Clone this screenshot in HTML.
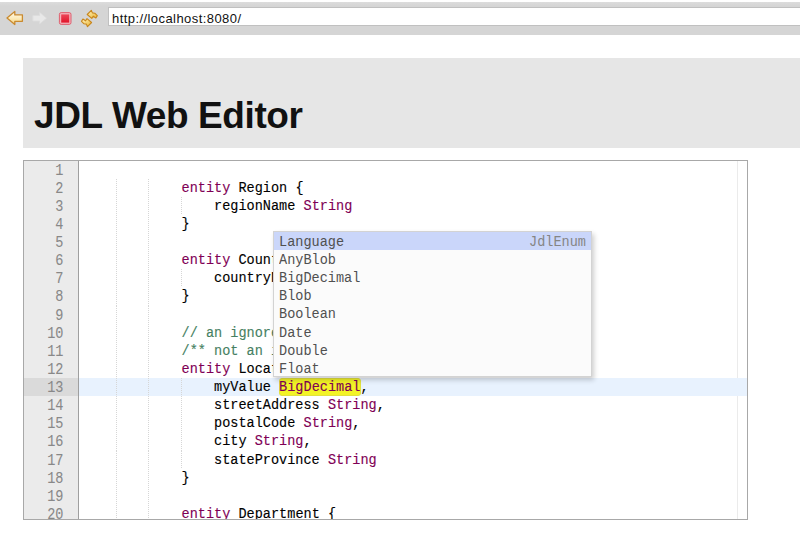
<!DOCTYPE html>
<html><head><meta charset="utf-8">
<style>
html,body{margin:0;padding:0;width:800px;height:539px;overflow:hidden;background:#fff;position:relative}
*{box-sizing:border-box}
.abs{position:absolute}
.ln{position:absolute;left:24px;width:39.5px;text-align:right;font:13.55px "Liberation Mono",monospace;color:#888;height:18.12px;line-height:18.12px;white-space:pre;padding-top:2px;transform:scaleY(1.15);transform-origin:0 14.5px;-webkit-text-stroke:0.05px currentColor}
.cl{position:absolute;left:84.0px;font:13.55px "Liberation Mono",monospace;color:#000;white-space:pre;height:18.12px;line-height:18.12px;padding-top:1px;transform:translateY(0.5px) scaleY(1.08);transform-origin:0 14px;-webkit-text-stroke:0.12px currentColor}
.kw{color:#7f0055}
.cm{color:#467f62}
.g{position:absolute;width:1px;background:repeating-linear-gradient(to bottom,#d6d6d6 0,#d6d6d6 1px,transparent 1px,transparent 2px)}
.pr{position:absolute;left:0;width:317px;height:18.12px;line-height:18.12px;font:13.55px "Liberation Mono",monospace;color:#505050;white-space:pre;padding-left:5px}
.pr span.t{display:inline-block;padding-top:2.5px;transform:scaleY(1.08);transform-origin:0 14px}
.pr.sel{background:#cad6fa}
.pr .m{position:absolute;right:5px;top:0;color:#858585;padding-top:2.5px;transform:scaleY(1.08);transform-origin:0 14px}
</style></head><body>
<div class="abs" style="left:0;top:2px;width:800px;height:33px;background:linear-gradient(to bottom,#dcdcdc 0,#d5d5d5 4px,#d5d5d5 100%)"></div>
<div class="abs" style="left:108px;top:7px;width:700px;height:19px;background:#fff;border:1px solid #c0c0c0;border-right:none;box-shadow:0 -0.5px 0.5px #c8c8c8"></div>
<div class="abs" style="left:112px;top:9.5px;font:13px 'Liberation Sans',sans-serif;color:#111;white-space:pre;line-height:17px;letter-spacing:0.43px">http://localhost:8080/</div>
<svg class="abs" style="left:0;top:0" width="108" height="35" viewBox="0 0 108 35">
  <defs>
    <linearGradient id="yl" x1="0" y1="0" x2="0" y2="1"><stop offset="0" stop-color="#fffdf2"/><stop offset="0.5" stop-color="#fdecbc"/><stop offset="1" stop-color="#f4d27c"/></linearGradient>
    <linearGradient id="yl2" x1="0" y1="0" x2="1" y2="1"><stop offset="0" stop-color="#fff4c0"/><stop offset="1" stop-color="#e9b22e"/></linearGradient>
    <linearGradient id="rd" x1="0" y1="0" x2="0" y2="1"><stop offset="0" stop-color="#ec4658"/><stop offset="1" stop-color="#e1142a"/></linearGradient>
  </defs>
  <path d="M7 17.9 L14.8 11.5 L14.8 14.9 L22.4 14.9 L22.4 21.3 L14.8 21.3 L14.8 24.5 Z" fill="url(#yl)" stroke="#c98a30" stroke-width="1.3" stroke-linejoin="round"/>
  <path d="M46.6 18.2 L39.6 12.3 L39.6 15.4 L32.8 15.4 L32.8 21 L39.6 21 L39.6 24 Z" fill="#e8e8e8" stroke="#dcdcdc" stroke-width="0.8" stroke-linejoin="round"/>
  <rect x="59.4" y="12.6" width="11.6" height="11.8" rx="1.8" fill="#f4b2ba" stroke="#dc5464" stroke-width="0.9"/>
  <rect x="61.2" y="14.4" width="8" height="8.2" fill="url(#rd)"/>
  <path d="M87.2 14.5 L91.3 10.3 L92.4 12.9 L94.8 13.2 L97.3 15.6 L95.9 18.0 L93.2 16.2 L91.8 18.4 Z" fill="url(#yl2)" stroke="#c8861c" stroke-width="1.1" stroke-linejoin="round"/>
  <path d="M91.6 22.5 L87.5 26.7 L86.4 24.1 L84.0 23.8 L81.5 21.4 L82.9 19.0 L85.6 20.8 L87.0 18.6 Z" fill="url(#yl2)" stroke="#c8861c" stroke-width="1.1" stroke-linejoin="round"/>
</svg>
<div class="abs" style="left:23px;top:58px;width:777px;height:90px;background:#e6e6e6"></div>
<div class="abs" style="left:34px;top:95px;font:bold 37px 'Liberation Sans',sans-serif;color:#111;white-space:pre;line-height:42px;letter-spacing:-0.4px">JDL Web Editor</div>
<div class="abs" style="left:23px;top:160px;width:725px;height:360px;border:1px solid #a8a8a8;background:#fff"></div>
<div class="abs" style="left:24px;top:161px;width:54px;height:358px;background:#ebebeb"></div>
<div class="abs" style="left:24px;top:161px;width:723px;height:358px;overflow:hidden">
<div class="abs" style="left:-24px;top:-161px;width:800px;height:539px">
<div class="abs" style="left:737px;top:161px;width:1px;height:358px;background:#ebebeb"></div>
<div class="abs" style="left:79px;top:378.04px;width:668px;height:18.12px;background:#e8f2fe"></div>
<div class="abs" style="left:24px;top:378.04px;width:54px;height:18.12px;background:#dadada"></div>
<div class="abs" style="left:78px;top:161px;width:1px;height:358px;background:#9f9f9f"></div>
<div class="abs" style="left:278.62px;top:378.04px;width:82.50px;height:18.12px;background:#f3f326;border:1px solid #e2e23e;border-radius:3px"></div>
<div class="g" style="left:115.52px;top:178.72px;height:18.12px"></div>
<div class="g" style="left:148.04px;top:178.72px;height:18.12px"></div>
<div class="g" style="left:115.52px;top:196.84px;height:18.12px"></div>
<div class="g" style="left:148.04px;top:196.84px;height:18.12px"></div>
<div class="g" style="left:180.56px;top:196.84px;height:18.12px"></div>
<div class="g" style="left:115.52px;top:214.96px;height:18.12px"></div>
<div class="g" style="left:148.04px;top:214.96px;height:18.12px"></div>
<div class="g" style="left:115.52px;top:233.08px;height:18.12px"></div>
<div class="g" style="left:148.04px;top:233.08px;height:18.12px"></div>
<div class="g" style="left:115.52px;top:251.20px;height:18.12px"></div>
<div class="g" style="left:148.04px;top:251.20px;height:18.12px"></div>
<div class="g" style="left:115.52px;top:269.32px;height:18.12px"></div>
<div class="g" style="left:148.04px;top:269.32px;height:18.12px"></div>
<div class="g" style="left:180.56px;top:269.32px;height:18.12px"></div>
<div class="g" style="left:115.52px;top:287.44px;height:18.12px"></div>
<div class="g" style="left:148.04px;top:287.44px;height:18.12px"></div>
<div class="g" style="left:115.52px;top:305.56px;height:18.12px"></div>
<div class="g" style="left:148.04px;top:305.56px;height:18.12px"></div>
<div class="g" style="left:115.52px;top:323.68px;height:18.12px"></div>
<div class="g" style="left:148.04px;top:323.68px;height:18.12px"></div>
<div class="g" style="left:115.52px;top:341.80px;height:18.12px"></div>
<div class="g" style="left:148.04px;top:341.80px;height:18.12px"></div>
<div class="g" style="left:115.52px;top:359.92px;height:18.12px"></div>
<div class="g" style="left:148.04px;top:359.92px;height:18.12px"></div>
<div class="g" style="left:115.52px;top:378.04px;height:18.12px"></div>
<div class="g" style="left:148.04px;top:378.04px;height:18.12px"></div>
<div class="g" style="left:180.56px;top:378.04px;height:18.12px"></div>
<div class="g" style="left:115.52px;top:396.16px;height:18.12px"></div>
<div class="g" style="left:148.04px;top:396.16px;height:18.12px"></div>
<div class="g" style="left:180.56px;top:396.16px;height:18.12px"></div>
<div class="g" style="left:115.52px;top:414.28px;height:18.12px"></div>
<div class="g" style="left:148.04px;top:414.28px;height:18.12px"></div>
<div class="g" style="left:180.56px;top:414.28px;height:18.12px"></div>
<div class="g" style="left:115.52px;top:432.40px;height:18.12px"></div>
<div class="g" style="left:148.04px;top:432.40px;height:18.12px"></div>
<div class="g" style="left:180.56px;top:432.40px;height:18.12px"></div>
<div class="g" style="left:115.52px;top:450.52px;height:18.12px"></div>
<div class="g" style="left:148.04px;top:450.52px;height:18.12px"></div>
<div class="g" style="left:180.56px;top:450.52px;height:18.12px"></div>
<div class="g" style="left:115.52px;top:468.64px;height:18.12px"></div>
<div class="g" style="left:148.04px;top:468.64px;height:18.12px"></div>
<div class="g" style="left:115.52px;top:486.76px;height:18.12px"></div>
<div class="g" style="left:148.04px;top:486.76px;height:18.12px"></div>
<div class="g" style="left:115.52px;top:504.88px;height:18.12px"></div>
<div class="g" style="left:148.04px;top:504.88px;height:18.12px"></div>
<div class="ln" style="top:160.60px">1</div>
<div class="cl" style="top:160.60px"></div>
<div class="ln" style="top:178.72px">2</div>
<div class="cl" style="top:178.72px">            <span class="kw">entity</span> Region {</div>
<div class="ln" style="top:196.84px">3</div>
<div class="cl" style="top:196.84px">                regionName <span class="kw">String</span></div>
<div class="ln" style="top:214.96px">4</div>
<div class="cl" style="top:214.96px">            }</div>
<div class="ln" style="top:233.08px">5</div>
<div class="cl" style="top:233.08px"></div>
<div class="ln" style="top:251.20px">6</div>
<div class="cl" style="top:251.20px">            <span class="kw">entity</span> Country {</div>
<div class="ln" style="top:269.32px">7</div>
<div class="cl" style="top:269.32px">                countryName <span class="kw">String</span></div>
<div class="ln" style="top:287.44px">8</div>
<div class="cl" style="top:287.44px">            }</div>
<div class="ln" style="top:305.56px">9</div>
<div class="cl" style="top:305.56px"></div>
<div class="ln" style="top:323.68px">10</div>
<div class="cl" style="top:323.68px">            <span class="cm">// an ignored comment</span></div>
<div class="ln" style="top:341.80px">11</div>
<div class="cl" style="top:341.80px">            <span class="cm">/** not an ignored comment */</span></div>
<div class="ln" style="top:359.92px">12</div>
<div class="cl" style="top:359.92px">            <span class="kw">entity</span> Location {</div>
<div class="ln" style="top:378.04px">13</div>
<div class="cl" style="top:378.04px">                myValue <span class="kw">BigDecimal</span>,</div>
<div class="ln" style="top:396.16px">14</div>
<div class="cl" style="top:396.16px">                streetAddress <span class="kw">String</span>,</div>
<div class="ln" style="top:414.28px">15</div>
<div class="cl" style="top:414.28px">                postalCode <span class="kw">String</span>,</div>
<div class="ln" style="top:432.40px">16</div>
<div class="cl" style="top:432.40px">                city <span class="kw">String</span>,</div>
<div class="ln" style="top:450.52px">17</div>
<div class="cl" style="top:450.52px">                stateProvince <span class="kw">String</span></div>
<div class="ln" style="top:468.64px">18</div>
<div class="cl" style="top:468.64px">            }</div>
<div class="ln" style="top:486.76px">19</div>
<div class="cl" style="top:486.76px"></div>
<div class="ln" style="top:504.88px">20</div>
<div class="cl" style="top:504.88px">            <span class="kw">entity</span> Department {</div>
</div></div>
<div class="abs" style="left:273px;top:231px;width:319px;height:146px;background:#fbfbfb;border:1px solid #d3d3d3;box-shadow:2px 3px 5px rgba(0,0,0,.2);overflow:hidden">
<div class="pr sel" style="top:0.00px"><span class="t">Language</span><span class="m">JdlEnum</span></div>
<div class="pr" style="top:18.12px"><span class="t">AnyBlob</span></div>
<div class="pr" style="top:36.24px"><span class="t">BigDecimal</span></div>
<div class="pr" style="top:54.36px"><span class="t">Blob</span></div>
<div class="pr" style="top:72.48px"><span class="t">Boolean</span></div>
<div class="pr" style="top:90.60px"><span class="t">Date</span></div>
<div class="pr" style="top:108.72px"><span class="t">Double</span></div>
<div class="pr" style="top:126.84px"><span class="t">Float</span></div>
</div>
</body></html>
